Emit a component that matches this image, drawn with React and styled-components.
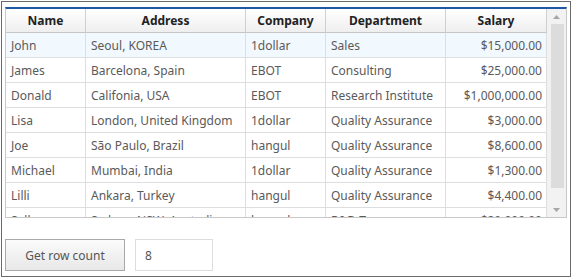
import React from "react";
import styled, { createGlobalStyle } from "styled-components";

const GlobalStyle = createGlobalStyle`
  html, body { margin: 0; padding: 0; background: #fff; }
  body { font-family: "Noto Sans", "Open Sans", Arial, sans-serif; }
`;

const Frame = styled.div`
  box-sizing: border-box;
  margin: 1px;
  width: 570px;
  height: 276px;
  border: 1px solid #6a6a6a;
  padding: 5px 3px 0 3px;
`;

const Grid = styled.div`
  box-sizing: border-box;
  width: 562px;
  height: 211px;
  border-top: 2px solid #1d58a7;
  border-left: 1px solid #c8c8c8;
  border-right: 1px solid #c8c8c8;
  border-bottom: 1px solid #c8c8c8;
  display: flex;
  overflow: hidden;
`;

const TableArea = styled.div`
  width: 541px;
  display: flex;
  flex-direction: column;
`;

const Row = styled.div`
  display: grid;
  grid-template-columns: 80px 160px 80px 120px 101px;
  height: ${(p) => (p.$head ? 24 : 25)}px;
  flex-shrink: 0;
  background: ${(p) =>
    p.$head
      ? "linear-gradient(#ffffff, #eeeeee)"
      : p.$active
      ? "#f1f8fe"
      : "#ffffff"};
`;

const Cell = styled.div`
  box-sizing: border-box;
  border-right: 1px solid ${(p) => (p.$head ? "#cfcfcf" : "#dedede")};
  border-bottom: 1px solid ${(p) => (p.$head ? "#c6c6c6" : "#dedede")};
  display: flex;
  align-items: center;
  justify-content: ${(p) =>
    p.$head ? "center" : p.$right ? "flex-end" : "flex-start"};
  padding: ${(p) => (p.$head ? "0" : p.$right ? "0 4px 0 0" : "0 0 0 5px")};
  font-size: 12px;
  font-weight: ${(p) => (p.$head ? 700 : 400)};
  color: ${(p) => (p.$head ? "#222" : "#5a5a5a")};
  white-space: nowrap;
  overflow: hidden;
`;

const Body = styled.div`
  height: 184px;
  overflow: hidden;
  display: flex;
  flex-direction: column;
`;

const ScrollBar = styled.div`
  width: 19px;
  background: #f2f2f2;
  display: flex;
  flex-direction: column;
  align-items: center;
`;

const Arrow = styled.div`
  height: 15px;
  width: 100%;
  display: flex;
  align-items: center;
  justify-content: center;
  flex-shrink: 0;
`;

const Thumb = styled.div`
  width: 13px;
  height: 164px;
  background: #dcdcdc;
  margin-left: 1px;
`;

const Spacer = styled.div`
  flex: 1;
`;

const Controls = styled.div`
  display: flex;
  gap: 10px;
  margin-top: 21px;
`;

const Button = styled.button`
  box-sizing: border-box;
  width: 120px;
  height: 32px;
  border: 1px solid #a9a9a9;
  background: linear-gradient(#fbfbfb, #e8e8e8);
  font-family: "Noto Sans", "Open Sans", Arial, sans-serif;
  font-size: 12px;
  color: #555;
  padding: 0;
`;

const Input = styled.input`
  box-sizing: border-box;
  width: 78px;
  height: 32px;
  border: 1px solid #dddddd;
  padding: 0 0 0 9px;
  font-family: "Noto Sans", "Open Sans", Arial, sans-serif;
  font-size: 12px;
  color: #555;
  outline: none;
`;

const columns = ["Name", "Address", "Company", "Department", "Salary"];

const rows = [
  ["John", "Seoul, KOREA", "1dollar", "Sales", "$15,000.00"],
  ["James", "Barcelona, Spain", "EBOT", "Consulting", "$25,000.00"],
  ["Donald", "Califonia, USA", "EBOT", "Research Institute", "$1,000,000.00"],
  ["Lisa", "London, United Kingdom", "1dollar", "Quality Assurance", "$3,000.00"],
  ["Joe", "São Paulo, Brazil", "hangul", "Quality Assurance", "$8,600.00"],
  ["Michael", "Mumbai, India", "1dollar", "Quality Assurance", "$1,300.00"],
  ["Lilli", "Ankara, Turkey", "hangul", "Quality Assurance", "$4,400.00"],
  ["Sally", "Sydney, NSW, Australia", "hangul", "R&D Team", "$20,000.00"],
];

function Triangle({ up }) {
  return (
    <svg width="7" height="4" viewBox="0 0 7 4">
      <path d={up ? "M0 4 L3.5 0 L7 4 Z" : "M0 0 L3.5 4 L7 0 Z"} fill="#a6a6a6" />
    </svg>
  );
}

export default function App() {
  return (
    <>
      <GlobalStyle />
      <Frame>
        <Grid>
          <TableArea>
            <Row $head>
              {columns.map((c) => (
                <Cell key={c} $head>
                  {c}
                </Cell>
              ))}
            </Row>
            <Body>
              {rows.map((r, i) => (
                <Row key={i} $active={i === 0}>
                  {r.map((v, j) => (
                    <Cell key={j} $right={j === 4}>
                      {v}
                    </Cell>
                  ))}
                </Row>
              ))}
            </Body>
          </TableArea>
          <ScrollBar>
            <Arrow>
              <Triangle up />
            </Arrow>
            <Thumb />
            <Spacer />
            <Arrow>
              <Triangle />
            </Arrow>
          </ScrollBar>
        </Grid>
        <Controls>
          <Button>Get row count</Button>
          <Input defaultValue="8" />
        </Controls>
      </Frame>
    </>
  );
}
